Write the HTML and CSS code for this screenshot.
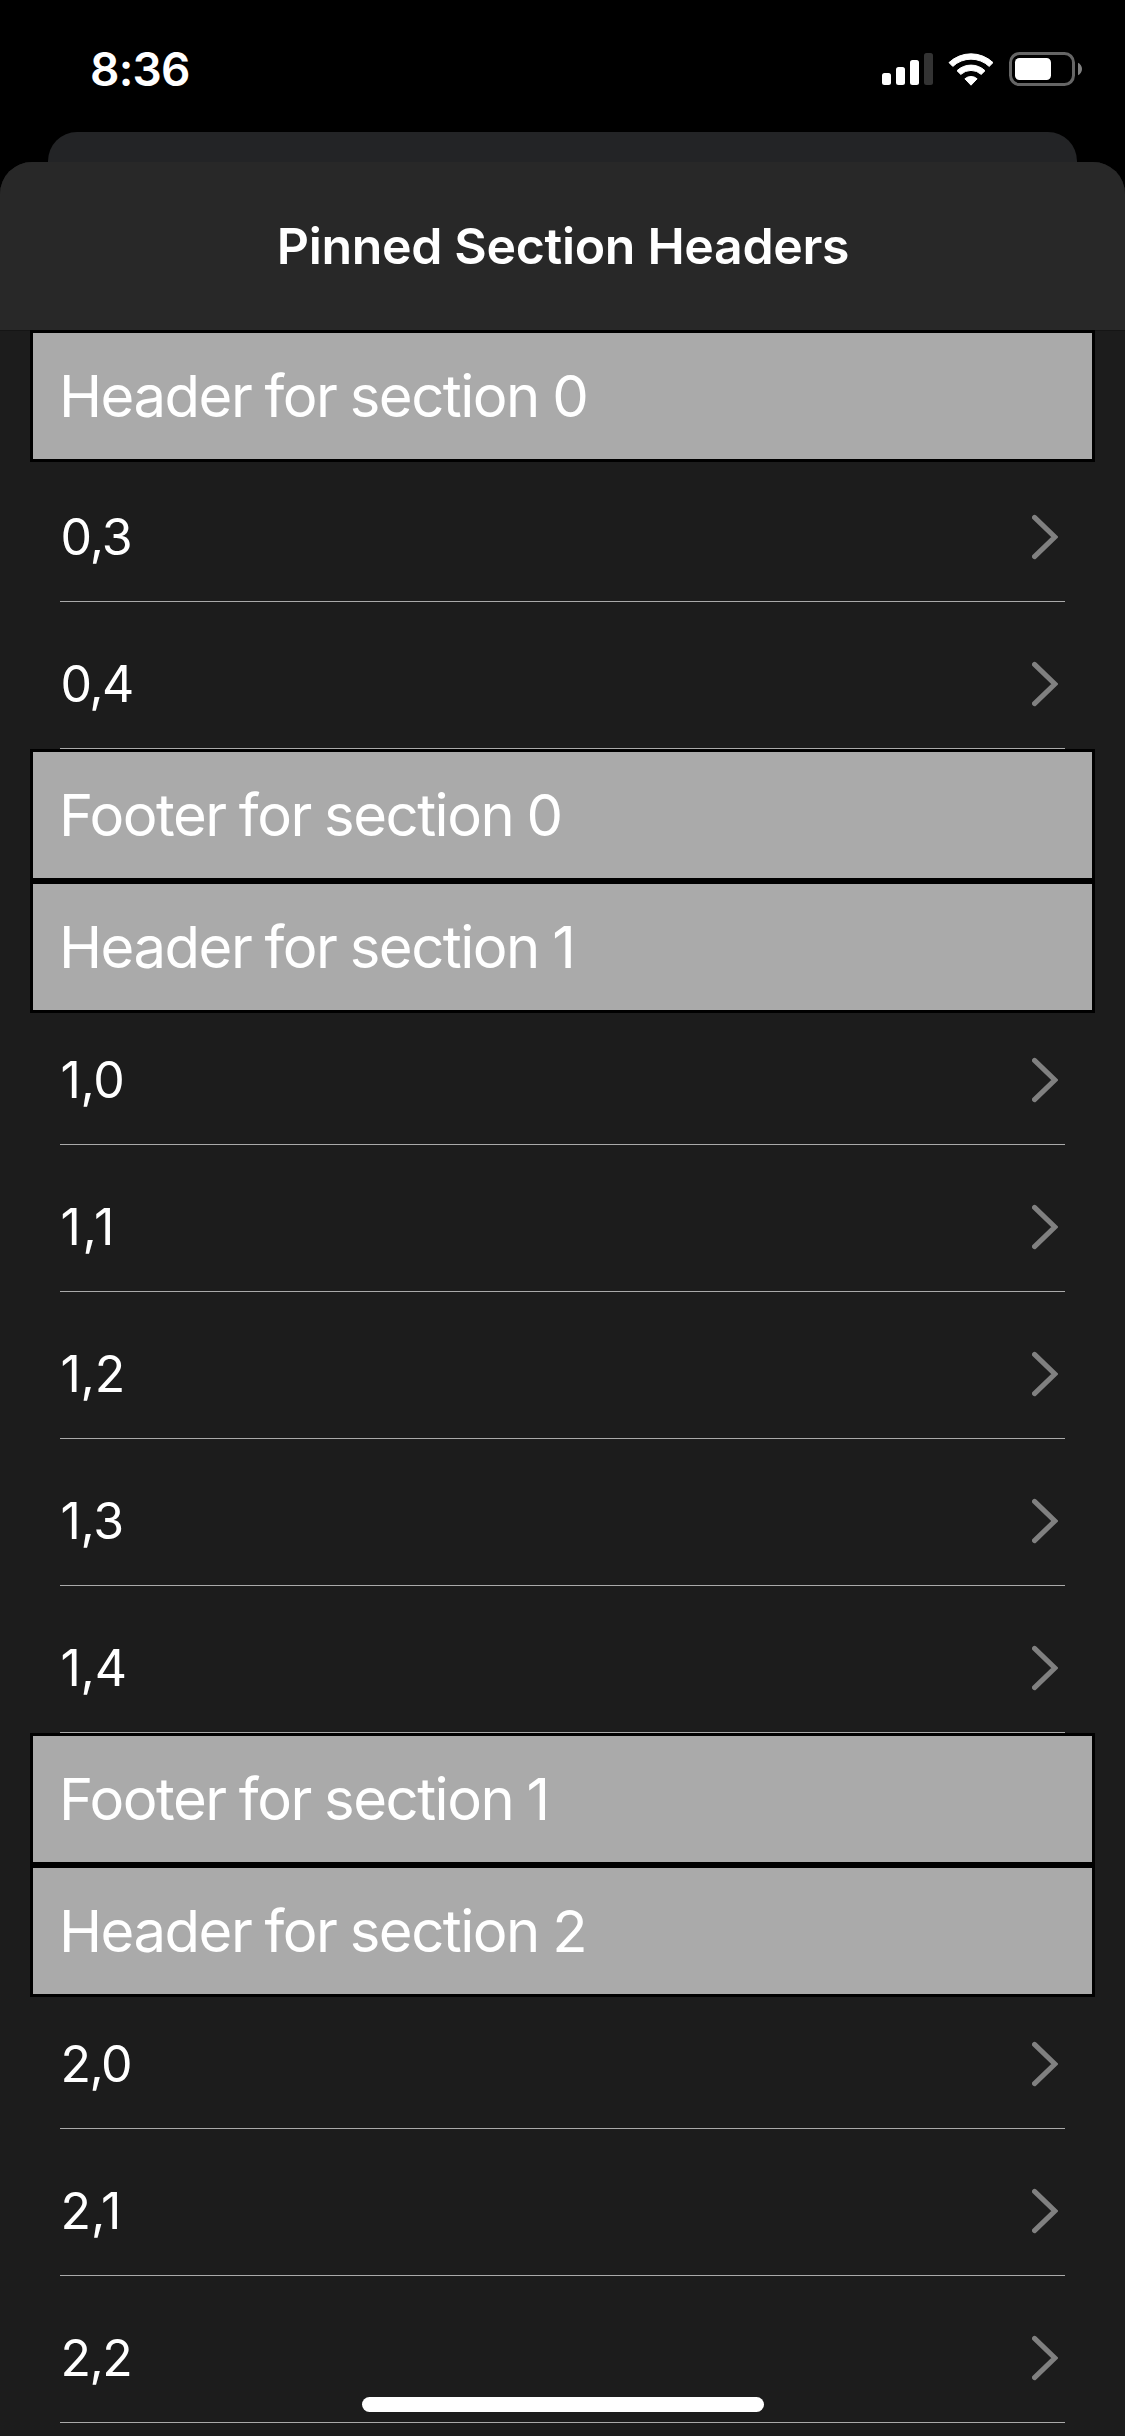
FILE: index.html
```html
<!DOCTYPE html>
<html lang="en">
<head>
<meta charset="utf-8">
<title>Pinned Section Headers</title>
<link rel="stylesheet" href="styles.css">
</head>
<body>
<svg width="0" height="0" class="defs" aria-hidden="true">
  <symbol id="chevron" viewBox="0 0 26 46"><path d="M2.5 3.4 22.8 23 2.5 42.6" fill="none" stroke="#808080" stroke-width="5" stroke-linecap="round" stroke-linejoin="miter"/></symbol>
</svg>
<header class="status">
  <span class="time">8:36</span>
  <div class="indicators">
    <svg class="signal" width="51" height="32" viewBox="0 0 51 32" fill="#fff">
      <rect x="0" y="20" width="9" height="12" rx="2.5"/>
      <rect x="14" y="14" width="9" height="18" rx="2.5"/>
      <rect x="28" y="7" width="9" height="25" rx="2.5"/>
      <rect x="42" y="0" width="9" height="32" rx="2.5" fill="#333"/>
    </svg>
    <svg class="wifi" width="46" height="33" viewBox="0 0 46 33" fill="#fff" stroke="#fff" stroke-width="1" stroke-linejoin="round">
      <path d="M1 9.6A32 32 0 0 1 45 9.6L41.2 13.4A26.5 26.5 0 0 0 4.8 13.4Z"/>
      <path d="M9 17.7A20.3 20.3 0 0 1 37 17.7L33.2 21.4A15 15 0 0 0 12.8 21.4Z"/>
      <path d="M16.9 25.8A9.2 9.2 0 0 1 29.1 25.8L23 32.2Z"/>
    </svg>
    <svg class="battery" width="73" height="34" viewBox="0 0 73 34">
      <rect x="1.5" y="1.5" width="63" height="31" rx="9" fill="none" stroke="#666" stroke-width="3"/>
      <rect x="6" y="6" width="36" height="22" rx="4.5" fill="#fff"/>
      <path d="M69 10.8C71.3 11.8 73 14.2 73 17S71.3 22.2 69 23.2Z" fill="#808080"/>
    </svg>
  </div>
</header>
<div class="back-card"></div>
<main class="sheet">
  <h1 class="title">Pinned Section Headers</h1>
  <div class="list">
    <div class="band">Header for section 0</div>
    <div class="rows">
      <div class="row lead">0,3<svg class="chevron"><use href="#chevron"/></svg></div>
      <div class="row">0,4<svg class="chevron"><use href="#chevron"/></svg></div>
    </div>
    <div class="band">Footer for section 0</div>
    <div class="band">Header for section 1</div>
    <div class="rows ones">
      <div class="row">1,0<svg class="chevron"><use href="#chevron"/></svg></div>
      <div class="row double-one">1,1<svg class="chevron"><use href="#chevron"/></svg></div>
      <div class="row">1,2<svg class="chevron"><use href="#chevron"/></svg></div>
      <div class="row">1,3<svg class="chevron"><use href="#chevron"/></svg></div>
      <div class="row">1,4<svg class="chevron"><use href="#chevron"/></svg></div>
    </div>
    <div class="band">Footer for section 1</div>
    <div class="band">Header for section 2</div>
    <div class="rows">
      <div class="row">2,0<svg class="chevron"><use href="#chevron"/></svg></div>
      <div class="row ends-one">2,1<svg class="chevron"><use href="#chevron"/></svg></div>
      <div class="row">2,2<svg class="chevron"><use href="#chevron"/></svg></div>
    </div>
  </div>
</main>
<div class="home-indicator"></div>
</body>
</html>
```

FILE: styles.css
```css
* { box-sizing: border-box; }

body {
  margin: 0;
  width: 1125px;
  height: 2436px;
  overflow: hidden;
  background: #000;
  color: #fff;
  font-family: Inter, "Liberation Sans", sans-serif;
  display: flex;
  flex-direction: column;
}

.defs { position: absolute; }

.status {
  flex: none;
  height: 132px;
  padding: 6px 43px 0 90px;
  display: flex;
  align-items: center;
  justify-content: space-between;
}

.time {
  font-size: 46px;
  font-weight: 600;
  letter-spacing: -0.8px;
}

.indicators {
  display: flex;
  align-items: center;
}

.wifi { margin-left: 15px; }
.battery { margin-left: 15px; }

.back-card {
  flex: none;
  height: 30px;
  margin: 0 48px;
  border-radius: 29px 29px 0 0;
  background: #232426;
}

.sheet {
  flex: 1;
  border-radius: 32px 32px 0 0;
  background: #1c1c1c;
  overflow: hidden;
}

.title {
  height: 168px;
  margin: 0;
  padding-left: 1px;
  display: flex;
  align-items: center;
  justify-content: center;
  background: #282828;
  box-shadow: 0 1px #151515;
  font-size: 50px;
  font-weight: 600;
  letter-spacing: -0.32px;
}

.list { padding: 0 30px; }

.band {
  position: relative;
  height: 132px;
  padding-left: 26px;
  border: 3px solid #000;
  background: #aaa;
  display: flex;
  align-items: center;
  font-size: 58px;
  letter-spacing: -1.5px;
  word-spacing: -1.5px;
}

.rows {
  padding: 0 30px;
  display: flex;
  flex-direction: column;
  gap: 15px;
}

.row {
  height: 132px;
  padding: 3px 7px 0 0.5px;
  border-bottom: 1px solid #aaa;
  display: flex;
  align-items: center;
  justify-content: space-between;
  font-size: 50px;
  letter-spacing: -1.6px;
}

.lead {
  margin-top: 8px;
  letter-spacing: -1px;
}

.ends-one { letter-spacing: 0; }

.ones .row { letter-spacing: -0.3px; }
.ones .double-one { letter-spacing: 1.6px; }

.chevron {
  width: 26px;
  height: 46px;
}

.home-indicator {
  position: absolute;
  left: 362px;
  top: 2397px;
  width: 402px;
  height: 15px;
  border-radius: 8px;
  background: #fff;
}
```
